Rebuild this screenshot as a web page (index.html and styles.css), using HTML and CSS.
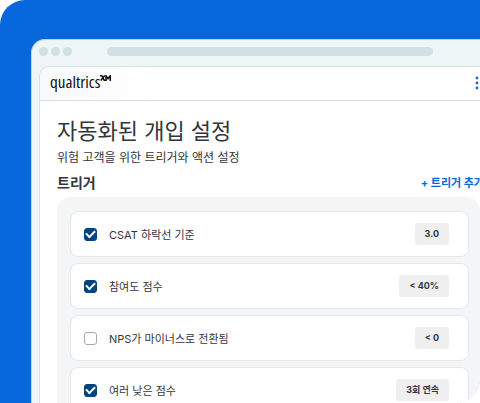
FILE: index.html
```html
<!DOCTYPE html>
<html lang="ko">
<head>
<meta charset="utf-8">
<title>자동화된 개입 설정</title>
<link rel="stylesheet" href="styles.css">
</head>
<body>
<div class="stage">
  <div class="browser">
    <div class="chrome"><i class="dot"></i><i class="dot"></i><i class="dot"></i><i class="address"></i></div>
    <div class="page">
      <header class="topbar">
        <div class="logo">qualtrics<svg class="xm" viewBox="0 0 22 12" aria-hidden="true"><path d="M0 1.500h3.500l5 9H12V1.500l4 6 4.500-6v10.500M9.500 1 1.500 11" fill="none" stroke="#111" stroke-width="3"/></svg></div>
        <button class="more" aria-label="메뉴"><svg viewBox="0 0 4 14"><circle cx="2" cy="2" r="1.4"/><circle cx="2" cy="7" r="1.4"/><circle cx="2" cy="12" r="1.4"/></svg></button>
      </header>
      <main class="content">
        <h1>자동화된 개입 설정</h1>
        <p class="lead">위험 고객을 위한 트리거와 액션 설정</p>
        <div class="section-head"><h2>트리거</h2><button class="add">+ 트리거 추가</button></div>
        <div class="panel">
          <label class="row"><input type="checkbox" checked><span class="name">CSAT 하락선 기준</span><span class="value">3.0</span></label>
          <label class="row"><input type="checkbox" checked><span class="name">참여도 점수</span><span class="value">&lt; 40%</span></label>
          <label class="row"><input type="checkbox"><span class="name">NPS가 마이너스로 전환됨</span><span class="value">&lt; 0</span></label>
          <label class="row"><input type="checkbox" checked><span class="name">여러 낮은 점수</span><span class="value">3회 연속</span></label>
        </div>
      </main>
    </div>
  </div>
</div>
</body>
</html>
```
FILE: styles.css
```css
* { box-sizing: border-box; }
body {
  margin: 0;
  background: #fff;
  color: #32363a;
  font-family: Inter, "Noto Sans CJK KR", sans-serif;
}
h1, h2, p { margin: 0; }
button { border: 0; padding: 0; background: none; font: inherit; }
.stage {
  height: 100vh;
  overflow: hidden;
  padding: 39px 0 0 31px;
  background: #0768dd;
  border-radius: 25px 0 25px 0;
}
.browser {
  padding-left: 7px;
  background: #edf5f7;
  border: 1px solid #b9d5ee;
  border-width: 1px 0 0 1px;
  border-radius: 14px 0 0 0;
}
.chrome { display: flex; align-items: center; height: 26px; padding: 0 47px 3px 0; }
.dot { width: 9px; height: 9px; margin-right: 3px; border-radius: 50%; background: #d1e0e5; }
.address { flex: 1; height: 9px; margin-left: 32px; border-radius: 5px; background: #d1e0e5; }
.page {
  background: #fff;
  border: 1px solid #d9e1e4;
  border-width: 1px 0 0 1px;
  border-radius: 10px 0 0 0;
}
.topbar {
  display: flex;
  align-items: center;
  justify-content: space-between;
  height: 34px;
  padding: 0 1px 2px 10px;
  border-bottom: 1px solid #dedede;
  border-radius: 9px 0 0 0;
  background: linear-gradient(90deg, #f8f9fb, #fff 120px);
}
.logo {
  display: flex;
  align-items: flex-start;
  color: #111;
  font: 17px/24px "Open Sans", sans-serif;
  font-stretch: condensed;
  padding-bottom: 2px;
}
.xm { width: 11px; height: 6px; margin-top: 5px; }
.more { display: flex; }
.more svg { width: 4px; height: 14px; fill: #2861b5; }
.content { padding: 14px 0 0 17px; }
h1 { font-size: 22px; line-height: 32px; font-weight: 400; }
.lead { font-size: 12px; line-height: 20px; margin-top: 1px; }
.section-head { display: flex; justify-content: space-between; align-items: center; height: 29px; margin-right: -4px; }
h2 { font-size: 14px; line-height: 20px; font-weight: 700; }
.add { color: #0768dd; font-size: 11px; line-height: 20px; font-weight: 700; white-space: nowrap; }
.panel {
  display: grid;
  gap: 6px;
  padding: 14px 11px 14px 13px;
  background: #f4f5f7;
  border-radius: 14px;
}
.row {
  display: flex;
  align-items: center;
  height: 46px;
  padding: 0 19px 0 13px;
  border: 1px solid #e6e7e9;
  border-radius: 8px;
  background: #fff;
}
.row input {
  appearance: none;
  display: grid;
  place-items: center;
  width: 13px;
  height: 13px;
  margin: 0 12px 0 0;
  border: 1px solid #aaa;
  border-radius: 3px;
  background: #fff;
}
.row input:checked {
  border-color: #04437f;
  background: #04437f;
}
.row input:checked::before {
  content: "";
  width: 7px;
  height: 4px;
  margin-bottom: 2px;
  border: solid #fff;
  border-width: 0 0 2px 2px;
  transform: rotate(-45deg);
}
.name { flex: 1; font-size: 11px; }
.value {
  padding: 0 10px;
  border-radius: 3px;
  background: #efefef;
  font-size: 9px;
  line-height: 22px;
  font-weight: 700;
}
```
